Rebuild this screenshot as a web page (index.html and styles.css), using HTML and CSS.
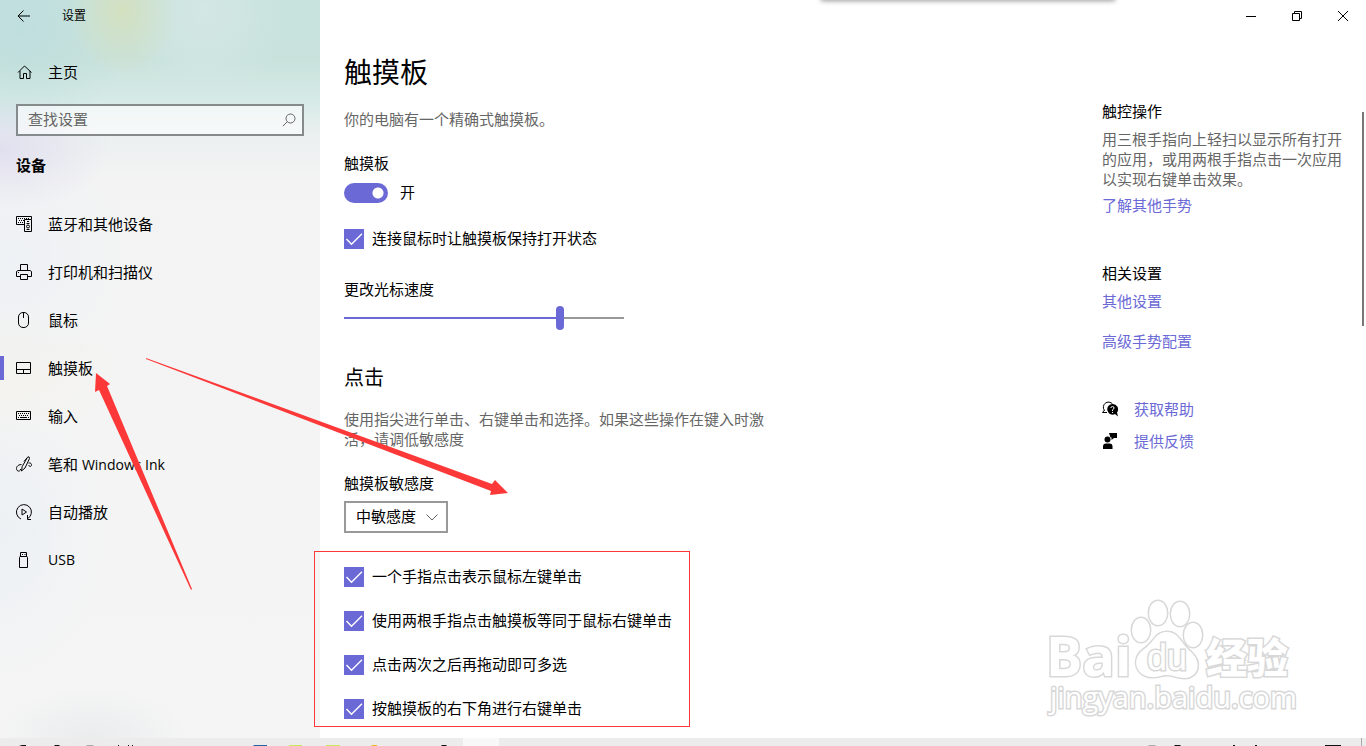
FILE: index.html
```
<!DOCTYPE html>
<html lang="zh-CN">
<head>
    <meta charset="UTF-8">
    <meta name="viewport" content="width=device-width, initial-scale=1.0">
    <title>设置</title>
    <link rel="stylesheet" href="styles.css">
</head>
<body>
    <div class="window">
        <nav class="sidebar">
            <div class="titlebar">
                <button class="back" aria-label="返回">
                    <svg width="14" height="12" viewBox="0 0 14 12"><path d="M13 6H1M6.500 .5L1 6l5.500 5.500"/></svg>
                </button>
                <span>设置</span>
            </div>
            <a class="nav-item home" href="#">
                <svg class="icon" viewBox="0 0 16 16"><path d="M2 8.500L8.500 2 15.500 8.500M4 7V14.500H7.500V9.500H10.500V14.500H14V7"/></svg>
                主页
            </a>
            <div class="search">
                <input type="text" placeholder="查找设置" aria-label="查找设置">
                <svg width="14" height="14" viewBox="0 0 14 14"><circle cx="8.500" cy="5.500" r="4.500"/><path d="M5.300 8.700L.8 13.200"/></svg>
            </div>
            <h2 class="group">设备</h2>
            <a class="nav-item" href="#">
                <svg class="icon" viewBox="0 0 16 16"><path d="M8 8.500H.5V.5H15.500V3"/><path d="M2 2.500H13M3 4.500H8M2 6.500H8" stroke-dasharray="1 1"/><path d="M8.500 3.500H15.500V15.500H8.500Z"/><path d="M11 5.500H13M10.500 7.500H13.500M10.500 13.500H13.500"/><circle cx="12" cy="10.500" r="1.500"/></svg>
                蓝牙和其他设备
            </a>
            <a class="nav-item" href="#">
                <svg class="icon" viewBox="0 0 16 16"><path d="M4.500 6V.5H11.500V6M4 12.500H.5V7.500L2 6.500H14L15.500 7.500V12.500H12M4.500 10.500H11.500V15.500H4.500Z"/><path d="M2 8.500H3"/></svg>
                打印机和扫描仪
            </a>
            <a class="nav-item" href="#">
                <svg class="icon" viewBox="0 0 16 16"><rect x="2.500" y=".5" width="10" height="15" rx="4.500"/><path d="M7.500 1V6"/></svg>
                鼠标
            </a>
            <a class="nav-item selected" href="#">
                <svg class="icon" viewBox="0 0 16 16"><path d="M.5 2.500H14.500V13.500H.5ZM.5 9.500H14.500M7.500 9.500V13.500"/></svg>
                触摸板
            </a>
            <a class="nav-item" href="#">
                <svg class="icon" viewBox="0 0 16 16"><path d="M.5 3.500H14.500V11.500H.5Z"/><path d="M2 5.500H13M3 7.500H13M2 9.500H3M12 9.500H13" stroke-dasharray="1 1"/><path d="M4 9.500H11"/></svg>
                输入
            </a>
            <a class="nav-item" href="#">
                <svg class="icon" viewBox="0 0 16 16"><path d="M5.500 15L6.200 10.500 11.500 1.200Q13.500-.2 13.500 2.500L9 12 5.500 15M11 2L8 5.500M5.500 8.500C1.500 8.500-.8 12 1.200 14.500 2.500 16 5 14.500 4.500 13M12.500 7C15.500 6.500 16.500 9 14.500 10.500L12.500 9.500"/></svg>
                <span>笔和 <span class="latin">Windows Ink</span></span>
            </a>
            <a class="nav-item" href="#">
                <svg class="icon" viewBox="0 0 16 16"><path d="M5 15A7.500 7.500 0 1 1 11.500 14.700M11.500 11V15.500H15M6 5L10.500 8 6 11Z"/></svg>
                自动播放
            </a>
            <a class="nav-item" href="#">
                <svg class="icon" viewBox="0 0 16 16"><path d="M4.500 5V.5H10.500V5M3.500 15.500V5.500Q3.500 4.500 4.500 4.500H10.500Q11.500 4.500 11.500 5.500V15.500Z"/><path d="M6 2.500H7M8.500 2.500H9.500"/></svg>
                <span class="latin">USB</span>
            </a>
        </nav>

        <div class="page">
            <div class="controls">
                <button aria-label="最小化"><svg width="10" height="10" viewBox="0 0 10 10"><path d="M0 5.500H10"/></svg></button>
                <button aria-label="还原"><svg width="10" height="10" viewBox="0 0 10 10"><path d="M.5 2.500H7.500V9.500H.5ZM2.500 2.500V.5H9.500V7.500H7.500"/></svg></button>
                <button aria-label="关闭"><svg width="10" height="10" viewBox="0 0 10 10"><path d="M0 0L10 10M10 0L0 10"/></svg></button>
            </div>
            <div class="content">
                <main>
                    <h1>触摸板</h1>
                    <p class="intro">你的电脑有一个精确式触摸板。</p>

                    <label class="caption" for="touchpad">触摸板</label>
                    <div class="toggle-row">
                        <input type="checkbox" role="switch" class="toggle" id="touchpad" checked>
                        <span>开</span>
                    </div>
                    <label class="check"><input type="checkbox" checked>连接鼠标时让触摸板保持打开状态</label>

                    <label class="caption speed" for="speed">更改光标速度</label>
                    <input type="range" class="slider" id="speed" min="0" max="100" value="78">

                    <h2>点击</h2>
                    <p class="hint">使用指尖进行单击、右键单击和选择。如果这些操作在键入时激活，请调低敏感度</p>

                    <label class="caption" for="sensitivity">触摸板敏感度</label>
                    <select id="sensitivity">
                        <option>中敏感度</option>
                    </select>

                    <div class="checks">
                        <label class="check"><input type="checkbox" checked>一个手指点击表示鼠标左键单击</label>
                        <label class="check"><input type="checkbox" checked>使用两根手指点击触摸板等同于鼠标右键单击</label>
                        <label class="check"><input type="checkbox" checked>点击两次之后再拖动即可多选</label>
                        <label class="check"><input type="checkbox" checked>按触摸板的右下角进行右键单击</label>
                    </div>
                </main>

                <aside>
                    <h3>触控操作</h3>
                    <p>用三根手指向上轻扫以显示所有打开的应用，或用两根手指点击一次应用以实现右键单击效果。</p>
                    <a href="#">了解其他手势</a>
                    <h3 class="related">相关设置</h3>
                    <a href="#" class="first">其他设置</a>
                    <a href="#" class="next">高级手势配置</a>
                    <div class="support">
                        <a href="#">
                            <svg width="16" height="16" viewBox="0 0 16 16"><path d="M2.500 9.500A5 5 0 1 1 10.500 3M2.500 9L.5 11.500H5" fill="none" stroke="#000"/><path d="M10.500 3a5.300 5.300 0 1 0 2.500 10l3 2.500-1-4A5.300 5.300 0 0 0 10.500 3z"/><path d="M8.800 7Q9 5.500 10.500 5.500 12 5.500 12 7 12 8 10.500 8.800V10M10.500 11V12" fill="none" stroke="#fff"/></svg>
                            获取帮助
                        </a>
                        <a href="#">
                            <svg width="16" height="16" viewBox="0 0 16 16"><circle cx="5.500" cy="6.500" r="3"/><path d="M1 16V13.500Q1 10.500 4 10.500H7.500Q10.500 10.500 10.500 13.500V16ZM7 0H15V5H12L9.500 7V4.500H8.500Z"/></svg>
                            提供反馈
                        </a>
                    </div>
                </aside>
            </div>
            <div class="scrollbar"></div>
            <svg class="watermark" width="260" height="130" viewBox="0 0 260 130">
                <ellipse cx="99" cy="30" rx="9" ry="12"/>
                <ellipse cx="116" cy="13" rx="9" ry="12"/>
                <ellipse cx="138" cy="14" rx="9" ry="12"/>
                <ellipse cx="151" cy="35" rx="9" ry="12"/>
                <path d="M125 32C113 32 113 42 101 50 88 60 95 77 110 77 119 77 119 75 125 75 132 75 134 78 143 78 157 77 160 62 149 52 139 44 137 32 125 32Z"/>
                <text class="brand" x="4" y="76">Bai</text>
                <text class="du" x="105" y="70">du</text>
                <text class="brand-cn" x="164" y="73">经验</text>
                <text class="site" x="8" y="108">jingyan.baidu.com</text>
            </svg>
        </div>
    </div>

    <footer class="taskbar">
        <i class="task-active"></i>
        <svg width="1366" height="8" viewBox="0 0 1366 8">
            <path d="M19 8l3-1h4v1zM54 8l1-1h4l1 1zM118 7h1v1h-1zM128 7h1v1h-1zM132 7h1v1h-1zM441 8l1-1h4l1 1zM1174 8l1-1h5l1 1zM1233 7h2v1h-2zM1255 7h2v1h-2zM1325 7h16v1h-16z" fill="#111"/>
            <path d="M86 8l1-1h6l1 1zM1148 8l1-1h6l1 1z" fill="#aaa"/>
            <path d="M253 8l1-1h13v1z" fill="#2564a0"/>
            <path d="M289 7h13v1h-13zM326 7h14v1h-14z" fill="#cde75b"/>
            <path d="M371 8l1-1h5v1z" fill="#f0b429"/>
            <path d="M1361 0h1v8h-1z" fill="#aaa"/>
        </svg>
    </footer>

    <div class="top-shadow"></div>
    <div class="marked"></div>
    <svg class="arrows" width="520" height="600" viewBox="0 0 520 600">
        <path d="M96 373L110 384 107 386 192 589 191 590 99 390 95 392Z"/>
        <path d="M508 493L490 495 491 491 146 359 146 358 492 484 495 480Z"/>
    </svg>
</body>
</html>
```
FILE: styles.css
```
* {
    box-sizing: border-box;
}
body {
    margin: 0;
    height: 100vh;
    display: flex;
    flex-direction: column;
    position: relative;
    overflow: hidden;
    background: #fff;
    color: #000;
    font-family: "Open Sans", "Noto Sans CJK SC", sans-serif;
    font-size: 15px;
    line-height: 20px;
}
h1, h2, h3, p {
    margin: 0;
    font-weight: normal;
}
a {
    color: #6b69d6;
    text-decoration: none;
}
button {
    border: 0;
    padding: 0;
    background: none;
}
svg {
    flex: none;
}
.window {
    flex: 1;
    min-height: 0;
    display: flex;
    overflow: hidden;
}

/* left navigation */
.sidebar {
    width: 320px;
    flex: none;
    background:
        radial-gradient(ellipse 55px 65px at 122px 10px, rgba(214, 224, 184, 0.8), rgba(214, 224, 184, 0)),
        radial-gradient(ellipse 110px 110px at 20px 30px, rgba(184, 220, 222, 0.6), rgba(184, 220, 222, 0)),
        radial-gradient(ellipse 110px 60px at 0 150px, rgba(220, 216, 238, 0.7), rgba(220, 216, 238, 0)),
        radial-gradient(ellipse 80px 90px at 205px 10px, rgba(216, 234, 232, 0.7), rgba(216, 234, 232, 0)),
        radial-gradient(ellipse 120px 130px at 10px 260px, rgba(234, 240, 246, 0.6), rgba(234, 240, 246, 0)),
        radial-gradient(ellipse 120px 70px at 0 370px, rgba(244, 242, 234, 0.7), rgba(244, 242, 234, 0)),
        radial-gradient(ellipse 110px 150px at 0 530px, rgba(230, 238, 244, 0.6), rgba(230, 238, 244, 0)),
        radial-gradient(ellipse 100px 50px at 90px 738px, rgba(226, 230, 232, 0.6), rgba(226, 230, 232, 0)),
        linear-gradient(#c8e2de 0, #c9e2dc 60px, #d6eae6 100px, #ebf0f0 135px, #f3f3f3 180px, #f5f5f5 100%);
}
.sidebar svg, .controls svg {
    fill: none;
    stroke: #000;
    stroke-width: 1;
}
.titlebar {
    display: flex;
    align-items: center;
    height: 32px;
    font-size: 12px;
}
.back {
    width: 48px;
    height: 32px;
    margin-right: 14px;
    display: flex;
    align-items: center;
    justify-content: center;
}
.nav-item {
    height: 48px;
    padding-left: 16px;
    display: flex;
    align-items: center;
    gap: 16px;
    color: #000;
}
.latin {
    font-size: 14px;
}
.icon {
    width: 16px;
    height: 16px;
    overflow: visible;
}
.home {
    margin-top: 16px;
}
.search {
    margin: 8px 16px 0;
    height: 32px;
    display: flex;
    align-items: center;
    padding: 0 6px 0 10px;
    border: 2px solid #858b8a;
    background: rgba(255, 255, 255, 0.6);
}
.search input {
    flex: 1;
    min-width: 0;
    border: 0;
    padding: 0 0 2px;
    outline: 0;
    background: none;
    font: inherit;
}
.search input::placeholder {
    color: #666;
}
.sidebar .search svg {
    stroke: #666;
}
.group {
    margin: 19px 16px 25px;
    font-size: 15px;
    font-weight: bold;
}
.selected {
    background: linear-gradient(#6b69d6, #6b69d6) 0 50% / 4px 24px no-repeat;
}

/* right side */
.page {
    flex: 1;
    min-width: 0;
    position: relative;
}
.controls {
    display: flex;
    justify-content: flex-end;
    height: 32px;
}
.controls button {
    width: 46px;
    display: flex;
    align-items: center;
    justify-content: center;
}
.content {
    display: flex;
    justify-content: space-between;
    padding: 0 24px;
}
main {
    width: 424px;
    padding-top: 20px;
}
h1 {
    font-size: 28px;
    line-height: 40px;
}
.intro {
    margin: 17px 0 24px;
    color: #666;
}
.caption {
    display: block;
}
.toggle-row {
    display: flex;
    gap: 12px;
    height: 20px;
    line-height: 18px;
    margin: 10px 0 26px;
}
.toggle {
    appearance: none;
    width: 44px;
    height: 20px;
    margin: 0;
    border-radius: 10px;
    background: radial-gradient(circle at 34px 10px, #fff 5px, #6b69d6 6px);
}
.check {
    display: flex;
    gap: 8px;
    height: 20px;
    line-height: 18px;
}
.check input {
    appearance: none;
    width: 20px;
    height: 20px;
    margin: 0;
    background: #6b69d6 url("data:image/svg+xml,%3Csvg xmlns='http://www.w3.org/2000/svg' viewBox='0 0 20 20'%3E%3Cpath d='M2.500 10L7.500 15.200 18 4.800' fill='none' stroke='white' stroke-width='1.400'/%3E%3C/svg%3E");
}
.speed {
    margin-top: 30px;
}
.slider {
    appearance: none;
    display: block;
    width: 280px;
    height: 24px;
    margin: 7px 0 34px;
    background: linear-gradient(90deg, #6b69d6 78%, #999 78%) 0 50% / 100% 2px no-repeat;
}
.slider::-webkit-slider-thumb {
    appearance: none;
    width: 8px;
    height: 24px;
    border-radius: 4px;
    background: #6b69d6;
}
main h2 {
    font-size: 20px;
    line-height: 28px;
}
.hint {
    margin: 17px 0 24px;
    color: #666;
}
select {
    appearance: none;
    display: block;
    width: 104px;
    height: 32px;
    margin-top: 8px;
    padding: 0 10px 2px;
    border: 2px solid #999;
    border-radius: 0;
    color: #000;
    font: inherit;
    background: #fff url("data:image/svg+xml,%3Csvg xmlns='http://www.w3.org/2000/svg' width='12' height='7'%3E%3Cpath d='M.5 .5L6 6 11.500 .5' fill='none' stroke='%23666'/%3E%3C/svg%3E") 80px 50% no-repeat;
}
.checks {
    display: grid;
    gap: 24px;
    margin-top: 34px;
}
aside {
    width: 240px;
    padding-top: 69px;
    flex: none;
}
aside p {
    margin: 8px 0 6px;
    color: #666;
}
aside h3 {
    font-size: 15px;
}
aside > a {
    display: block;
}
.related {
    margin-top: 48px;
}
.first {
    margin-top: 8px;
}
.next {
    margin-top: 20px;
}
.support {
    display: grid;
    gap: 12px;
    margin-top: 48px;
}
.support a {
    display: flex;
    align-items: center;
    gap: 16px;
}
.scrollbar {
    position: absolute;
    top: 112px;
    right: 2px;
    width: 2px;
    height: 214px;
    background: #777;
}

/* watermark */
.watermark {
    position: absolute;
    right: 64px;
    bottom: 8px;
    overflow: visible;
    fill: #fff;
    stroke: #d8d8d8;
    stroke-width: 3;
    paint-order: stroke;
}
.brand {
    font: bold 54px "Open Sans", sans-serif;
}
.du {
    font: 36px "Liberation Sans", sans-serif;
}
.brand-cn {
    font: 900 41px "Noto Sans CJK SC", sans-serif;
}
.site {
    font: 29px "Open Sans", sans-serif;
}

.taskbar {
    position: relative;
    height: 8px;
    flex: none;
    overflow: hidden;
    background: #ececec;
}
.taskbar svg {
    position: absolute;
    left: 0;
    top: 0;
}
.task-active {
    position: absolute;
    left: 463px;
    width: 36px;
    height: 8px;
    background: #f8f8f8;
}

/* marks drawn over the window */
.top-shadow {
    position: absolute;
    top: -10px;
    left: 822px;
    width: 292px;
    height: 10px;
    box-shadow: 0 0 5px 1px rgba(0, 0, 0, 0.4);
}
.marked {
    position: absolute;
    left: 314px;
    top: 551px;
    width: 376px;
    height: 176px;
    border: 1px solid #fc3838;
}
.arrows {
    position: absolute;
    left: 0;
    top: 0;
    fill: #fc3838;
    pointer-events: none;
}
```
